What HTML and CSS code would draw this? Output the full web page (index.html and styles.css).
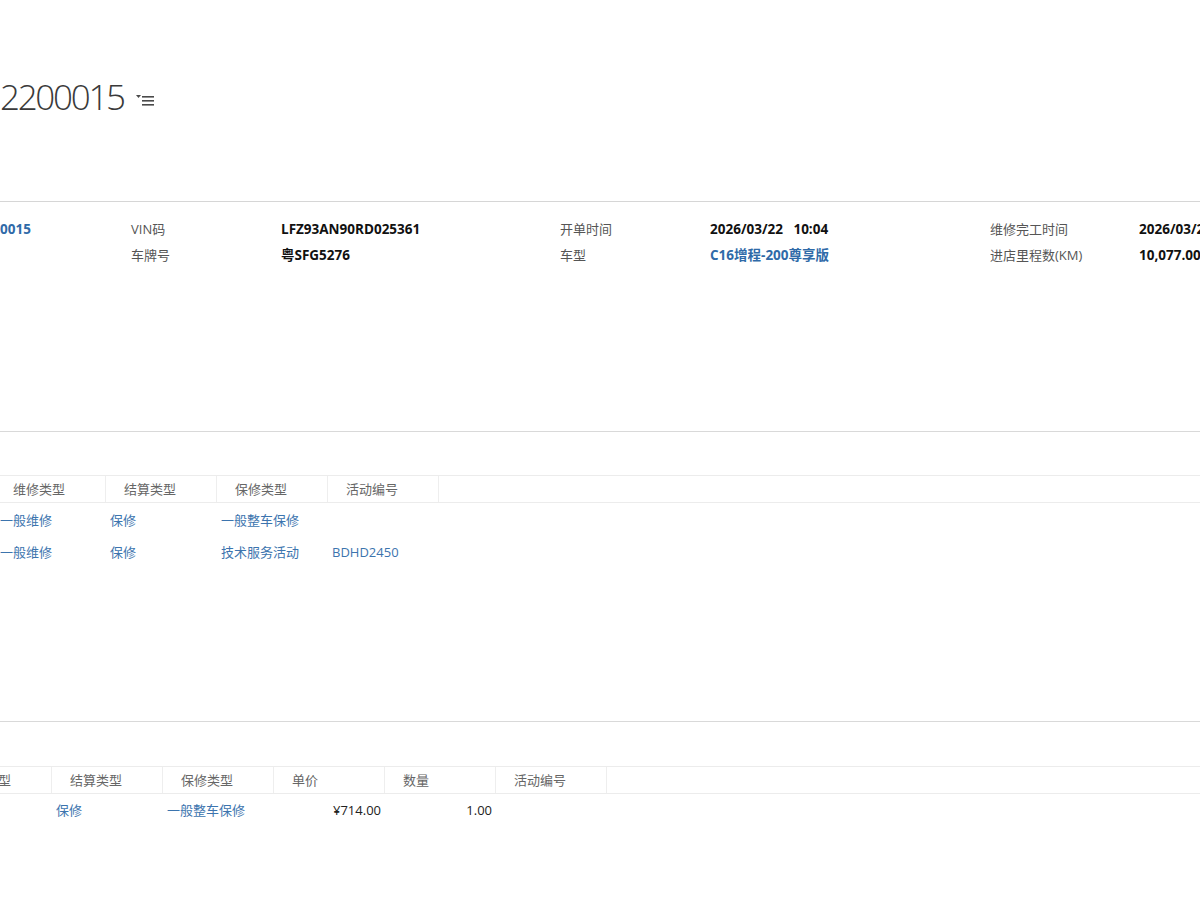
FILE: index.html
```html
<!DOCTYPE html>
<html lang="zh-CN">
<head>
<meta charset="utf-8">
<title>工单 2200015</title>
<link rel="stylesheet" href="styles.css">
</head>
<body>
<div class="page">
  <header class="page-header">
    <div class="title-row">
      <h1 class="title">2200015</h1>
      <svg class="title-menu" width="20" height="14" viewBox="0 0 20 14" aria-hidden="true">
        <polygon points="1,2 6,2 3.5,5" fill="#4a4a4a"/>
        <rect x="7" y="3" width="12" height="1.6" fill="#4a4a4a"/>
        <rect x="7" y="7" width="12" height="1.6" fill="#4a4a4a"/>
        <rect x="7" y="11" width="12" height="1.6" fill="#4a4a4a"/>
      </svg>
    </div>
  </header>

  <section class="summary">
    <div class="summary-grid">
      <div class="val link">0015</div>
      <div class="lbl">VIN码</div>
      <div class="val">LFZ93AN90RD025361</div>
      <div class="lbl">开单时间</div>
      <div class="val">2026/03/22&nbsp;&nbsp; 10:04</div>
      <div class="lbl">维修完工时间</div>
      <div class="val">2026/03/22&nbsp;&nbsp; 16:30</div>

      <div class="val"></div>
      <div class="lbl">车牌号</div>
      <div class="val">粤SFG5276</div>
      <div class="lbl">车型</div>
      <div class="val link">C16增程-200尊享版</div>
      <div class="lbl">进店里程数(KM)</div>
      <div class="val">10,077.00</div>
    </div>
  </section>

  <section class="section sec-items">
    <div class="grid grid-items">
      <div class="grid-head">
        <div class="hc">维修类型</div>
        <div class="hc">结算类型</div>
        <div class="hc">保修类型</div>
        <div class="hc">活动编号</div>
        <div class="hc hc-last"></div>
      </div>
      <div class="grid-row">
        <div class="dc link-plain">一般维修</div>
        <div class="dc link-plain">保修</div>
        <div class="dc link-plain">一般整车保修</div>
        <div class="dc"></div>
      </div>
      <div class="grid-row">
        <div class="dc link-plain">一般维修</div>
        <div class="dc link-plain">保修</div>
        <div class="dc link-plain">技术服务活动</div>
        <div class="dc link-plain">BDHD2450</div>
      </div>
    </div>
  </section>

  <section class="section sec-parts">
    <div class="grid grid-parts">
      <div class="grid-head">
        <div class="hc">维修类型</div>
        <div class="hc">结算类型</div>
        <div class="hc">保修类型</div>
        <div class="hc">单价</div>
        <div class="hc">数量</div>
        <div class="hc">活动编号</div>
        <div class="hc hc-last"></div>
      </div>
      <div class="grid-row">
        <div class="dc link-plain">一般维修</div>
        <div class="dc link-plain">保修</div>
        <div class="dc link-plain">一般整车保修</div>
        <div class="dc num">¥714.00</div>
        <div class="dc num">1.00</div>
        <div class="dc"></div>
      </div>
    </div>
  </section>
</div>
</body>
</html>
```

FILE: styles.css
```css
html, body {
  margin: 0;
  padding: 0;
  background: #ffffff;
}

body {
  font-family: "Segoe UI", "Open Sans", "Noto Sans CJK SC", sans-serif;
  font-size: 13px;
  color: #444444;
  overflow: hidden;
  width: 1200px;
  height: 900px;
}

.page {
  width: 1200px;
}

/* ---------- header ---------- */
.page-header {
  height: 201px;
  box-sizing: border-box;
  padding-top: 76px;
}

.title-row {
  display: flex;
  align-items: center;
  gap: 11px;
}

.title {
  margin: 0;
  font-family: "Segoe UI Light", "Open Sans", "Noto Sans CJK SC", sans-serif;
  font-weight: 300;
  font-size: 35px;
  line-height: 42px;
  letter-spacing: -2.3px;
  color: #3a3a3a;
}

.title-menu {
  display: block;
  margin-top: 6px;
}

/* ---------- summary ---------- */
.summary {
  border-top: 1px solid #d6d6d6;
  height: 230px;
  box-sizing: border-box;
  padding-top: 14px;
}

.summary-grid {
  display: grid;
  grid-template-columns: 131px 150px 279px 150px 280px 149px 1fr;
  grid-auto-rows: 26px;
  line-height: 26px;
  white-space: nowrap;
}

.lbl {
  font-size: 13px;
  color: #555555;
}

.val {
  font-size: 13.5px;
  font-weight: 700;
  color: #111111;
  overflow: hidden;
}

.val.link {
  color: #2f6aa8;
}

/* ---------- grids ---------- */
.section {
  border-top: 1px solid #d9d9d9;
  box-sizing: border-box;
}

.sec-items {
  height: 290px;
  padding-top: 43px;
}

.sec-parts {
  height: 180px;
  padding-top: 44px;
}

.grid {
  white-space: nowrap;
}

.grid-head {
  display: flex;
  border-top: 1px solid #ececec;
  border-bottom: 1px solid #ececec;
  height: 26px;
  width: 1300px;
}

.grid-items .grid-head,
.grid-items .grid-row {
  margin-left: -5px;
}

.grid-parts .grid-head,
.grid-parts .grid-row {
  margin-left: -59px;
}

.grid-items .grid-head {
  margin-bottom: 1px;
}

.hc {
  width: 111px;
  flex: none;
  box-sizing: border-box;
  padding-left: 18px;
  line-height: 26px;
  color: #666666;
  font-size: 13px;
  border-right: 1px solid #eeeeee;
}

.hc-last {
  border-right: none;
}

.grid-row {
  display: flex;
  height: 32px;
}

.dc {
  width: 111px;
  flex: none;
  box-sizing: border-box;
  padding-left: 5px;
  padding-right: 4px;
  line-height: 32px;
  font-size: 13px;
  color: #333333;
}

.grid-row .dc + .dc {
  padding-left: 4px;
}

.link-plain {
  color: #3c74ae;
}

.dc.num {
  text-align: right;
  color: #222222;
}
```
